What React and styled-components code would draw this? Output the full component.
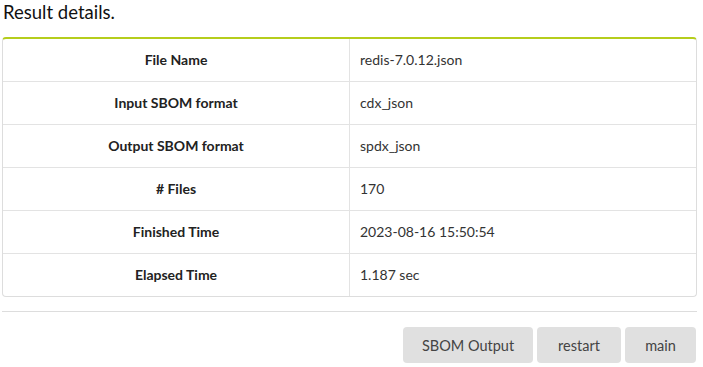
import React from "react";
import styled, { createGlobalStyle } from "styled-components";

const Global = createGlobalStyle`
  html, body { margin: 0; padding: 0; background: #fff; }
  body { font-family: Lato, "Open Sans", sans-serif; color: #333; }
`;

const Page = styled.div`
  width: 695px;
  margin-left: 2px;
`;

const Title = styled.h3`
  margin: 0;
  padding: 0 0 0 1px;
  font-size: 18.5px;
  line-height: 24px;
  font-weight: 400;
  color: #111;
  height: 37px;
`;

const Card = styled.div`
  border: 1px solid #ddd;
  border-top: 2px solid #b5cd1c;
  border-radius: 4px;
  overflow: hidden;
`;

const Table = styled.table`
  width: 100%;
  border-collapse: collapse;
  font-size: 14px;
`;

const Row = styled.tr`
  & + & td { border-top: 1px solid #e3e3e3; }
`;

const Label = styled.td`
  width: 50%;
  height: 40px;
  padding: 0 12px 2px;
  text-align: center;
  font-weight: 700;
  color: #222;
  border-right: 1px solid #e3e3e3;
`;

const Value = styled.td`
  height: 40px;
  padding: 0 10px 2px;
  color: #333;
`;

const Divider = styled.hr`
  margin: 14px 0 15px;
  border: 0;
  border-top: 1px solid #ddd;
`;

const Actions = styled.div`
  display: flex;
  justify-content: flex-end;
  gap: 4px;
  padding-right: 1px;
`;

const Button = styled.button`
  height: 36px;
  width: ${(p) => p.$w}px;
  padding: 0;
  border: 0;
  border-radius: 4px;
  background: #e0e0e0;
  color: #444;
  font-family: Lato, sans-serif;
  font-size: 14.5px;
`;

const rows = [
  ["File Name", "redis-7.0.12.json"],
  ["Input SBOM format", "cdx_json"],
  ["Output SBOM format", "spdx_json"],
  ["# Files", "170"],
  ["Finished Time", "2023-08-16 15:50:54"],
  ["Elapsed Time", "1.187 sec"],
];

export default function App() {
  return (
    <Page>
      <Global />
      <Title>Result details.</Title>
      <Card>
        <Table>
          <tbody>
            {rows.map(([k, v]) => (
              <Row key={k}>
                <Label>{k}</Label>
                <Value>{v}</Value>
              </Row>
            ))}
          </tbody>
        </Table>
      </Card>
      <Divider />
      <Actions>
        <Button $w={130}>SBOM Output</Button>
        <Button $w={84}>restart</Button>
        <Button $w={71}>main</Button>
      </Actions>
    </Page>
  );
}
